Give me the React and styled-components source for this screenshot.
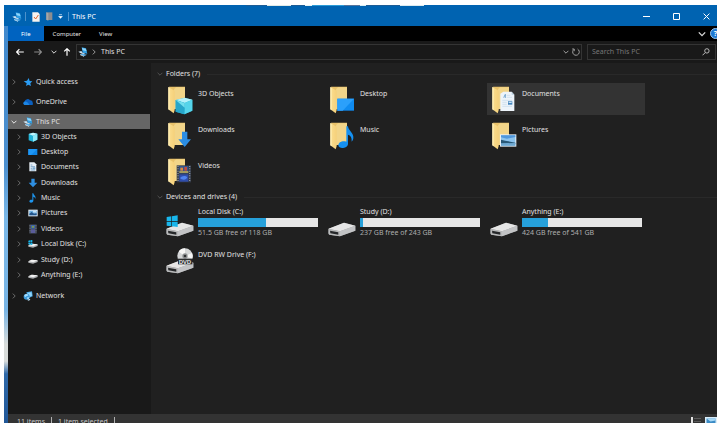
import React, { useState } from 'react';
import styled, { createGlobalStyle, css } from 'styled-components';

const color = {
   accent: '#0063b1',
   panel: '#191919',
   content: '#202020',
   line: '#343434',
   text: '#e0e0e0',
   dim: '#aeaeae',
   bar: '#26a0da',
};

const GlobalStyle = createGlobalStyle`
   *,
   *::before,
   *::after {
      box-sizing: border-box;
   }
   body {
      margin: 0;
      overflow: hidden;
      background: #fff;
      color: ${color.text};
      font-family: 'Noto Sans', 'Open Sans', sans-serif;
      font-size: 7px;
      line-height: 10px;
   }
   button,
   input {
      font: inherit;
      color: inherit;
   }
   ul {
      list-style: none;
      margin: 0;
      padding: 0;
   }
   svg {
      display: block;
      flex: none;
   }
`;

/* ---------- icons ---------- */

const Chevron = ({ dir = 'right', size = 6, stroke = '#8a8a8a', width = 1 }) => (
   <svg width={size} height={size} viewBox='0 0 6 6' fill='none' stroke={stroke} strokeWidth={width}>
      <path d={dir === 'right' ? 'M1.8.6 4.2 3 1.8 5.4' : 'M.6 1.8 3 4.2 5.4 1.8'} />
   </svg>
);

const Arrow = ({ rotate = 0, stroke = '#fff' }) => (
   <svg width='8' height='8' viewBox='0 0 8 8' fill='none' stroke={stroke} strokeWidth='1.2'>
      <path transform={`rotate(${rotate} 4 4)`} d='M7.8 4H.8M3.4 1.2.7 4l2.7 2.8' />
   </svg>
);

const PcIcon = () => (
   <svg width='10' height='10' viewBox='0 0 30 30'>
      <path d='M11 1 24 4l4 16-14-3z' fill='#2f9ee4' />
      <path d='M12 3 23 5l3 8-12-3z' fill='#8fd6fb' />
      <path d='M1 14l9-2 4 5 8 3-5 2-9-3z' fill='#cfe4f3' />
      <path d='M6 22l8-2 13 3-9 5z' fill='#5aaee6' />
      <path d='M6 22l12 5v2L6 24z' fill='#e3f0f9' />
   </svg>
);

const StarIcon = () => (
   <svg width='10' height='10' viewBox='0 0 30 30'>
      <path d='M17 3l3 9 8 1-6 6 2 8-8-4-7 4 2-8-9-6 10-2z' fill='#2b9df4' />
   </svg>
);

const CloudIcon = () => (
   <svg width='10' height='10' viewBox='0 0 30 30'>
      <path d='M6 24a6 6 0 01-1-11 9 9 0 0116-3 7 7 0 018 8 4 4 0 01-2 6z' fill='#0a5fc0' />
      <path d='M5 24c-5-1-6-8 0-10 5-2 11 3 14 10z' fill='#1c86e4' />
   </svg>
);

const CubeIcon = () => (
   <svg width='10' height='10' viewBox='0 0 30 30'>
      <path d='M2 6 15 2l13 3v18l-13 6L2 25z' fill='#22b4d8' />
      <path d='M2 6 15 2l13 3-13 6z' fill='#c2f5fc' />
      <path d='M15 11l13-6v18l-13 6z' fill='#8eeaf7' />
   </svg>
);

const DesktopIcon = () => (
   <svg width='10' height='10' viewBox='0 0 30 30'>
      <path d='M1 6h27v18H1z' fill='#0f86e8' />
      <path d='M1 6h27L9 24H1z' fill='#1f97f5' />
   </svg>
);

const DocIcon = () => (
   <svg width='10' height='10' viewBox='0 0 30 30'>
      <path d='M4 1h15l6 6v21H4z' fill='#e6eef5' />
      <path d='M8 9h5M8 14h13M8 19h5M8 24h13' stroke='#4f86b5' strokeWidth='2' />
      <path d='M14 16h8v6h-8z' fill='#7aa9cf' />
   </svg>
);

const DownloadIcon = () => (
   <svg width='10' height='10' viewBox='0 0 30 30'>
      <path d='M10 2h10v12h8L15 28 2 14h8z' fill='#2e8ee0' />
   </svg>
);

const NoteIcon = () => (
   <svg width='10' height='10' viewBox='0 0 30 30'>
      <path d='M13 1h3c0 6 9 7 6 17-1-5-3-6-6-7v12c0 7-12 8-12 2 0-5 6-6 9-4z' fill='#1d95ee' />
   </svg>
);

const PictureIcon = () => (
   <svg width='10' height='10' viewBox='0 0 30 30'>
      <path d='M1 5h28v20H1z' fill='#e9f1f8' />
      <path d='M4 8h22v14H4z' fill='#6aaee0' />
      <path d='M4 17l7-5 7 5 8-1v6H4z' fill='#24558a' />
      <path d='M15 10h9v3h-9z' fill='#f5fafd' />
   </svg>
);

const VideoIcon = () => (
   <svg width='10' height='10' viewBox='0 0 30 30'>
      <path d='M4 1h22v28H4z' fill='#3e4654' />
      <path d='M9 3h12v11H9z' fill='#3f66a8' />
      <path d='M9 16h12v11H9z' fill='#5a5c9a' />
      <path d='M12 6h6v5h-6z' fill='#7d9a4c' />
      <path d='M6 3v25M24 3v25' stroke='#b9bfc9' strokeWidth='2' strokeDasharray='2 3' />
   </svg>
);

const SmallDriveIcon = ({ system }) => (
   <svg width='10' height='10' viewBox='0 0 30 30'>
      <path d='M1 19l10-5 18 2v5l-14 5L1 23z' fill='#aeb0b2' />
      <path d='M1 19l10-5 18 2-13 6z' fill='#f1f1f1' />
      {system && <path d='M1 5l5-1v6H1zM7 4l6-1v7H7zM1 11h5v6l-5-1zM7 11h6v7l-6-1z' fill='#17b5ea' />}
   </svg>
);

const NetworkIcon = () => (
   <svg width='10' height='10' viewBox='0 0 30 30'>
      <path d='M10 4 27 1l2 15-12 5z' fill='#4aa9e6' />
      <path d='M13 6l12-2 2 10-8 3z' fill='#8fd4fa' />
      <circle cx='11' cy='17' r='9' fill='#3c9bdd' />
      <path d='M4 13c4-5 9-5 12-1-1 4-6 2-8 6-3 0-4-2-4-5zM12 20c3-2 6-1 7 0-1 3-4 5-6 5z' fill='#a5dcf9' />
      <path d='M13 27l7-4 2 3-5 3z' fill='#bfe3f7' />
   </svg>
);

const FolderArt = ({ kind }) => (
   <svg width='26' height='29' viewBox='0 0 78 87'>
      <defs>
         <linearGradient id={`flap-${kind}`} x1='0' x2='1' y1='0' y2='0'>
            <stop offset='0' stopColor='#fbdf90' />
            <stop offset='1' stopColor='#f5d07a' />
         </linearGradient>
      </defs>
      <path d='M3 2h48v67H16z' fill='#e9c26a' />
      <path d='M18 10 24 4h27v65H18z' fill='#f2d589' />
      <path d='M1 3 20 14v58l-3 10L1 70z' fill={`url(#flap-${kind})`} />
      <path d='M1 3 5 5v68L1 70z' fill='#ffeeb6' />
      {kind === 'cube' && (
         <>
            <path d='M23 42 50 35l23 6v33L49 85 23 77z' fill='#23b0d0' />
            <path d='M23 42 50 35l23 6-23 10z' fill='#b3f1fa' />
            <path d='M50 51 73 41v33L49 85z' fill='#55d4ea' />
            <path d='M23 42l27 9-1 34-26-8z' fill='#27a6ca' />
            <path d='M23 42l27 9v14z' fill='#72dfee' />
         </>
      )}
      {kind === 'desktop' && (
         <>
            <path d='M22 38h50v36H22z' fill='#0f8bf0' />
            <path d='M22 38h50L38 74H22z' fill='#2ba0fb' />
         </>
      )}
      {kind === 'document' && (
         <>
            <path d='M25 23 34 17h25l8 9v49H25z' fill='#edf4fa' />
            <path d='M59 17v9h8z' fill='#b9cfe0' />
            <path d='M35 35l5-10v11' fill='none' stroke='#4486bd' strokeWidth='2' />
            <path d='M44 28h11M44 34h16M31 43h29M31 49h13M31 55h13M31 61h29' stroke='#c3d9ea' strokeWidth='2' />
            <path d='M48 46h13v10H48z' fill='#4486bd' />
            <path d='M50 48h9v3h-9z' fill='#c7e2f5' />
         </>
      )}
      {kind === 'download' && <path d='M42 29h16v23h11L50 75 31 52h11z' fill='#2b8de3' />}
      {kind === 'note' && (
         <path
            d='M49 13h5c1 14 18 19 16 36-1 6-3 8-5 10 1-12-3-19-11-21v28c-1 14-28 17-29 4 0-10 13-15 24-11z'
            fill='#1590f0'
         />
      )}
      {kind === 'picture' && (
         <>
            <path d='M24 37h49v37H24z' fill='#e8f0f7' />
            <path d='M27 40h43v31H27z' fill='#8cc4ee' />
            <path d='M27 40h43v5l-25 5-18-4z' fill='#4f97dc' />
            <path d='M27 53l13 3 30 6v3H27z' fill='#285877' />
            <path d='M27 64l43-1v8H27z' fill='#6fa9d2' />
         </>
      )}
      {kind === 'video' && (
         <>
            <path d='M26 22h43v51H26z' fill='#343b49' />
            <path d='M34 24h27v22H34z' fill='#33558f' />
            <path d='M34 49h27v22H34z' fill='#2f4dab' />
            <path d='M37 29h8v9h-8z' fill='#d8863e' />
            <path d='M49 27h8v11h-8z' fill='#c04c3f' />
            <path d='M34 40h27v4H34z' fill='#d8bd45' />
            <path d='M36 60c6-8 17-8 22-2-3 9-16 9-22 2z' fill='#4f83ef' />
            <path d='M30 24v48M65 24v48' stroke='#8f959f' strokeWidth='4' strokeDasharray='3 4' />
         </>
      )}
   </svg>
);

const DriveBody = () => (
   <>
      <path d='M1 42 48 23l34 9v15L35 64 4 59q-3-1-3-4z' fill='#9d9fa1' />
      <path d='M1 41 48 23l34 9-46 17z' fill='#e6e6e6' />
      <path d='M36 49 82 32v15L36 64z' fill='#c2c3c5' />
      <path d='M2 42l34 7v15L4 59q-2-1-2-4z' fill='#b9babb' />
      <path d='M6 47l25 5v7L7 55z' fill='#26282a' />
   </>
);

const DriveArt = ({ kind }) =>
   kind === 'dvd' ? (
      <svg width='28' height='26' viewBox='0 0 84 78'>
         <g transform='translate(0 12)'>
            <DriveBody />
         </g>
         <circle cx='57' cy='24' r='23' fill='#d4d6d7' />
         <path d='M57 24 38 11A23 23 0 0157 1zM57 24l21-9a23 23 0 011 17z' fill='#f6f6f6' />
         <circle cx='57' cy='24' r='8' fill='#8e9193' />
         <circle cx='57' cy='24' r='4' fill='#303234' />
         <path d='M36 32h43v17H36z' fill='#2b2d2f' />
         <text x='57' y='47' textAnchor='middle' fontSize='18' fontWeight='600' fill='#f0f0f0'>
            DVD
         </text>
      </svg>
   ) : (
      <svg width='28' height='22' viewBox='0 0 84 66'>
         <DriveBody />
         {kind === 'system' && (
            <path d='M2 6l14-2v14H2zM18 4l17-3v17H18zM2 20h14v14L2 32zM18 20h17v16l-17-2z' fill='#18b6ec' />
         )}
      </svg>
   );

/* ---------- window frame ---------- */

const Screen = styled.div`
   height: 100vh;
   padding: 5px 0 0 4px;
   overflow: hidden;
`;

// the window runs a little past the right and bottom edges of the screen
const Window = styled.div`
   display: flex;
   flex-direction: column;
   width: calc(100% + 4px);
   height: calc(100% + 6px);
   padding-left: 4px;
   background: linear-gradient(#3f88cc 0, #4d90cf 38%, #7ab8e8 50%, #78b4e4 72%, #d9dcda 80%, #d9dcda 84%, #2f69a8 87%, #1f5596 100%);
`;

const TitleBar = styled.header`
   display: flex;
   align-items: center;
   height: 21px;
   margin-left: -4px;
   padding: 2px 0 0 8px;
   color: #fff;
   background:
      linear-gradient(
            90deg,
            #1c5c96 0 21px,
            #e2ebe8 21px 45px,
            #1c5c96 45px 59px,
            #e6f4f6 59px 66px,
            #2b9bd6 66px 98px,
            #56749c 98px 114px,
            #d9eef4 114px 120px,
            #1c5c96 120px 154px,
            #dcebf0 154px 178px,
            transparent 178px
         )
         242px 0 / 180px 1px no-repeat,
      ${color.accent};
`;

const QuickTools = styled.div`
   display: flex;
   align-items: center;
   gap: 3px;
   flex: 1;
`;

const IconButton = styled.button`
   display: flex;
   align-items: center;
   justify-content: center;
   width: ${(p) => p.$width || 10}px;
   height: ${(p) => p.$height || 14}px;
   padding: 0;
   border: 0;
   background: none;
`;

const Divider = styled.span`
   width: 1px;
   height: 9px;
   background: ${(p) => p.$tone || '#4d92cb'};
`;

const MenuBar = styled.nav`
   display: flex;
   align-items: stretch;
   height: 15px;
   background: #000;
`;

const MenuTab = styled.button`
   padding: 0 9px;
   border: 0;
   background: none;
   font-size: 6px;
   color: #e6e6e6;
   ${(p) =>
      p.$primary &&
      css`
         padding: 0 13px;
         background: #0063c0;
         color: #fff;
      `}
`;

const MenuEnd = styled.div`
   display: flex;
   align-items: center;
   gap: 3px;
   margin-left: auto;
`;

const Help = styled.button`
   width: 11px;
   height: 11px;
   padding: 0;
   border: 1px solid #9cc7f0;
   border-radius: 50%;
   background: #1d78d2;
   color: #fff;
   font-weight: 700;
   line-height: 9px;
`;

const NavBar = styled.div`
   display: flex;
   align-items: center;
   gap: 5px;
   height: 22px;
   padding: 0 5px 0 6px;
   background: ${color.panel};
`;

const NavButtons = styled.div`
   display: flex;
   align-items: center;
   gap: 6px;
   width: 57px;
`;

const Field = styled.div`
   display: flex;
   align-items: center;
   gap: 3px;
   height: 16px;
   border: 1px solid ${color.line};
`;

const AddressField = styled(Field)`
   flex: 1;
   padding: 0 1px;
`;

const Crumb = styled.a`
   flex: 1;
   padding-left: 1px;
   color: ${color.text};
   text-decoration: none;
`;

const SearchField = styled(Field)`
   flex: 0 1 129px;
   padding: 0 5px 0 4px;
`;

const SearchInput = styled.input`
   flex: 1;
   min-width: 0;
   padding: 0;
   border: 0;
   outline: 0;
   background: none;
   &::placeholder {
      color: #777;
      opacity: 1;
   }
`;

/* ---------- body ---------- */

const Body = styled.div`
   display: flex;
   flex: 1;
   min-height: 0;
`;

const Sidebar = styled.nav`
   flex: 0 0 143px;
   padding: 11px 1px 0 0;
   background: ${color.panel};
`;

const TreeList = styled.ul`
   display: flex;
   flex-direction: column;
   gap: 5px;
`;

const TreeGroup = styled.ul`
   display: grid;
   grid-auto-rows: 1fr;
   min-height: 154px;
`;

const TreeRow = styled.button`
   display: flex;
   align-items: center;
   gap: 3px;
   width: 100%;
   height: 15px;
   padding: 0 0 0 ${(p) => (p.$nested ? 8 : 3)}px;
   border: 0;
   text-align: left;
   background: ${(p) => (p.$selected ? '#666' : 'none')};
   svg:first-child {
      margin-right: 3px;
   }
`;

const Content = styled.main`
   flex: 1;
   min-width: 0;
   padding: 5px 4px 0 6px;
   background: ${color.content};
`;

const GroupTitle = styled.h2`
   display: flex;
   align-items: center;
   gap: 3px;
   height: 12px;
   margin: 0;
   font-size: 7px;
   font-weight: 400;
   &::after {
      content: '';
      flex: 1;
      height: 1px;
      margin-left: 4px;
      background: #292929;
   }
`;

const Tiles = styled.ul`
   display: grid;
   grid-template-columns: repeat(auto-fill, 158px);
   gap: 4px;
   padding: ${(p) => (p.$drives ? '2px 0 0 6px' : '3px 0 4px 6px')};
`;

const Tile = styled.button`
   display: flex;
   align-items: flex-start;
   width: 100%;
   height: ${(p) => (p.$drive ? 36 : 32)}px;
   padding: 0;
   border: 0;
   text-align: left;
   background: ${(p) => (p.$selected ? '#333' : 'none')};
`;

const TileArt = styled.span`
   display: flex;
   justify-content: flex-end;
   flex: 0 0 35px;
   padding: ${(p) => p.$top}px 4px 0 0;
`;

const TileText = styled.span`
   display: flex;
   flex-direction: column;
   flex: 1;
   gap: 1px;
   padding: ${(p) => p.$top}px 3px 0 0;
`;

const Meter = styled.span`
   display: block;
   height: 9px;
   background: #e6e6e6;
`;

const MeterFill = styled.span`
   display: block;
   height: 100%;
   background: ${color.bar};
`;

const Detail = styled.span`
   color: ${color.dim};
`;

const StatusBar = styled.footer`
   display: flex;
   align-items: center;
   gap: 6px;
   height: 15px;
   padding: 0 4px 0 9px;
   color: #c8c8c8;
   background: #333;
`;

const ViewButtons = styled.div`
   display: flex;
   gap: 3px;
   margin-left: auto;
`;

const pinned = [
   { name: 'Quick access', icon: <StarIcon /> },
   { name: 'OneDrive', icon: <CloudIcon /> },
];

const places = [
   { name: '3D Objects', icon: <CubeIcon /> },
   { name: 'Desktop', icon: <DesktopIcon /> },
   { name: 'Documents', icon: <DocIcon /> },
   { name: 'Downloads', icon: <DownloadIcon /> },
   { name: 'Music', icon: <NoteIcon /> },
   { name: 'Pictures', icon: <PictureIcon /> },
   { name: 'Videos', icon: <VideoIcon /> },
   { name: 'Local Disk (C:)', icon: <SmallDriveIcon system /> },
   { name: 'Study (D:)', icon: <SmallDriveIcon /> },
   { name: 'Anything (E:)', icon: <SmallDriveIcon /> },
];

const folders = [
   { name: '3D Objects', kind: 'cube' },
   { name: 'Desktop', kind: 'desktop' },
   { name: 'Documents', kind: 'document' },
   { name: 'Downloads', kind: 'download' },
   { name: 'Music', kind: 'note' },
   { name: 'Pictures', kind: 'picture' },
   { name: 'Videos', kind: 'video' },
];

const drives = [
   { name: 'Local Disk (C:)', kind: 'system', free: 51.5, total: 118 },
   { name: 'Study (D:)', kind: 'disk', free: 237, total: 243 },
   { name: 'Anything (E:)', kind: 'disk', free: 424, total: 541 },
   { name: 'DVD RW Drive (F:)', kind: 'dvd' },
];

const TreeItem = ({ name, icon, nested, open, children }) => (
   <li>
      <TreeRow $nested={nested} $selected={open}>
         <Chevron dir={open ? 'down' : 'right'} stroke={open ? '#e8e8e8' : '#6c6c6c'} />
         {icon}
         {name}
      </TreeRow>
      {children}
   </li>
);

const DriveTile = ({ name, kind, free, total }) => (
   <li>
      <Tile $drive>
         <TileArt $top={kind === 'dvd' ? 3 : 10}>
            <DriveArt kind={kind} />
         </TileArt>
         <TileText $top={total ? 2 : 5}>
            <span>{name}</span>
            {total && (
               <>
                  <Meter>
                     <MeterFill style={{ width: `${(1 - free / total) * 100}%` }} />
                  </Meter>
                  <Detail>
                     {free} GB free of {total} GB
                  </Detail>
               </>
            )}
         </TileText>
      </Tile>
   </li>
);

const App = () => {
   const [query, setQuery] = useState('');
   const [selected, setSelected] = useState('Documents');

   return (
      <Screen>
         <GlobalStyle />
         <Window>
            <TitleBar>
               <QuickTools>
                  <PcIcon />
                  <Divider />
                  <IconButton $width={14} aria-label='Properties'>
                     <svg width='8' height='10' viewBox='0 0 24 30'>
                        <path d='M1 1h17l5 5v23H1z' fill='#f7f3ef' />
                        <path d='M6 15l5 6 8-12' fill='none' stroke='#e0662f' strokeWidth='3' />
                     </svg>
                  </IconButton>
                  <IconButton $width={7} aria-label='New folder'>
                     <svg width='7' height='9' viewBox='0 0 21 27'>
                        <path d='M1 1h18v23H1z' fill='#8b8d90' />
                        <path d='M1 1l6 3v22l-6-3z' fill='#a5a6a7' />
                     </svg>
                  </IconButton>
                  <IconButton $width={9} aria-label='Customize toolbar'>
                     <svg width='5' height='5' viewBox='0 0 5 5'>
                        <path d='M1 .5h3M.6 2.3h3.8L2.5 4.4z' stroke='#fff' strokeWidth='.5' fill='#fff' />
                     </svg>
                  </IconButton>
                  <Divider />
                  <span>This PC</span>
               </QuickTools>
               <IconButton $width={30} aria-label='Minimize'>
                  <svg width='7' height='7' viewBox='0 0 7 7'>
                     <path d='M0 3.5h7' stroke='#fff' />
                  </svg>
               </IconButton>
               <IconButton $width={30} aria-label='Maximize'>
                  <svg width='7' height='7' viewBox='0 0 7 7'>
                     <path d='M.5.5h6v6h-6z' fill='none' stroke='#fff' />
                  </svg>
               </IconButton>
               <IconButton $width={30} aria-label='Close'>
                  <svg width='7' height='7' viewBox='0 0 7 7'>
                     <path d='M.6.6l5.8 5.8M6.4.6.6 6.4' stroke='#fff' />
                  </svg>
               </IconButton>
            </TitleBar>

            <MenuBar>
               <MenuTab $primary>File</MenuTab>
               <MenuTab>Computer</MenuTab>
               <MenuTab>View</MenuTab>
               <MenuEnd>
                  <IconButton aria-label='Expand ribbon'>
                     <Chevron dir='down' size={8} stroke='#d8d8d8' />
                  </IconButton>
                  <Help aria-label='Help'>?</Help>
               </MenuEnd>
            </MenuBar>

            <NavBar>
               <NavButtons>
                  <IconButton $width={12} aria-label='Back'>
                     <Arrow />
                  </IconButton>
                  <IconButton $width={14} aria-label='Forward'>
                     <Arrow rotate={180} stroke='#8a8a8a' />
                  </IconButton>
                  <IconButton $width={6} aria-label='Recent locations'>
                     <Chevron dir='down' stroke='#ddd' />
                  </IconButton>
                  <IconButton $width={8} aria-label='Up'>
                     <Arrow rotate={90} />
                  </IconButton>
               </NavButtons>
               <AddressField>
                  <PcIcon />
                  <Chevron stroke='#999' />
                  <Crumb href='#this-pc'>This PC</Crumb>
                  <IconButton $width={6} aria-label='Previous locations'>
                     <Chevron dir='down' stroke='#a0a0a0' />
                  </IconButton>
                  <IconButton $width={8} aria-label='Refresh'>
                     <svg width='8' height='8' viewBox='0 0 8 8' fill='none' stroke='#a0a0a0'>
                        <path d='M5.6 1.1a3.3 3.3 0 11-3.7.3M2.2 3.2V1H.2' />
                     </svg>
                  </IconButton>
               </AddressField>
               <SearchField>
                  <SearchInput
                     type='text'
                     aria-label='Search This PC'
                     placeholder='Search This PC'
                     value={query}
                     onChange={(e) => setQuery(e.target.value)}
                  />
                  <svg width='8' height='8' viewBox='0 0 8 8' fill='none' stroke='#b8b8b8'>
                     <circle cx='4.9' cy='2.9' r='2.2' />
                     <path d='M3.3 4.5.5 7.3' />
                  </svg>
               </SearchField>
            </NavBar>

            <Body>
               <Sidebar>
                  <TreeList>
                     {pinned.map((item) => (
                        <TreeItem key={item.name} {...item} />
                     ))}
                     <TreeItem name='This PC' icon={<PcIcon />} open>
                        <TreeGroup>
                           {places.map((item) => (
                              <TreeItem key={item.name} {...item} nested />
                           ))}
                        </TreeGroup>
                     </TreeItem>
                     <TreeItem name='Network' icon={<NetworkIcon />} />
                  </TreeList>
               </Sidebar>

               <Content>
                  <section>
                     <GroupTitle>
                        <Chevron dir='down' stroke='#505050' />
                        Folders (7)
                     </GroupTitle>
                     <Tiles>
                        {folders.map(({ name, kind }) => (
                           <li key={name}>
                              <Tile $selected={selected === name} onClick={() => setSelected(name)}>
                                 <TileArt $top={3}>
                                    <FolderArt kind={kind} />
                                 </TileArt>
                                 <TileText $top={6}>{name}</TileText>
                              </Tile>
                           </li>
                        ))}
                     </Tiles>
                  </section>
                  <section>
                     <GroupTitle>
                        <Chevron dir='down' stroke='#505050' />
                        Devices and drives (4)
                     </GroupTitle>
                     <Tiles $drives>
                        {drives.map((drive) => (
                           <DriveTile key={drive.name} {...drive} />
                        ))}
                     </Tiles>
                  </section>
               </Content>
            </Body>

            <StatusBar>
               <span>11 items</span>
               <Divider $tone='#b0b0b0' />
               <span>1 item selected</span>
               <Divider $tone='#b0b0b0' />
               <ViewButtons>
                  <IconButton $width={12} $height={9} aria-label='Details view'>
                     <svg width='12' height='9' viewBox='0 0 12 9'>
                        <path d='M1 0h2v9H1z' fill='#e4e4e4' />
                        <path d='M4 1.5h7M4 4.5h7M4 7.5h7' stroke='#5a5a5a' />
                     </svg>
                  </IconButton>
                  <IconButton $width={12} $height={9} aria-label='Large icons view'>
                     <svg width='12' height='9' viewBox='0 0 12 9'>
                        <path d='M0 0h12v9H0z' fill='#dbeefa' />
                        <path d='M1.5 1.5h9v6h-9z' fill='#3c8cc6' />
                        <path d='M1.5 1.5h9v2l-5 1z' fill='#a8d8f5' />
                     </svg>
                  </IconButton>
               </ViewButtons>
            </StatusBar>
         </Window>
      </Screen>
   );
};

export default App;
